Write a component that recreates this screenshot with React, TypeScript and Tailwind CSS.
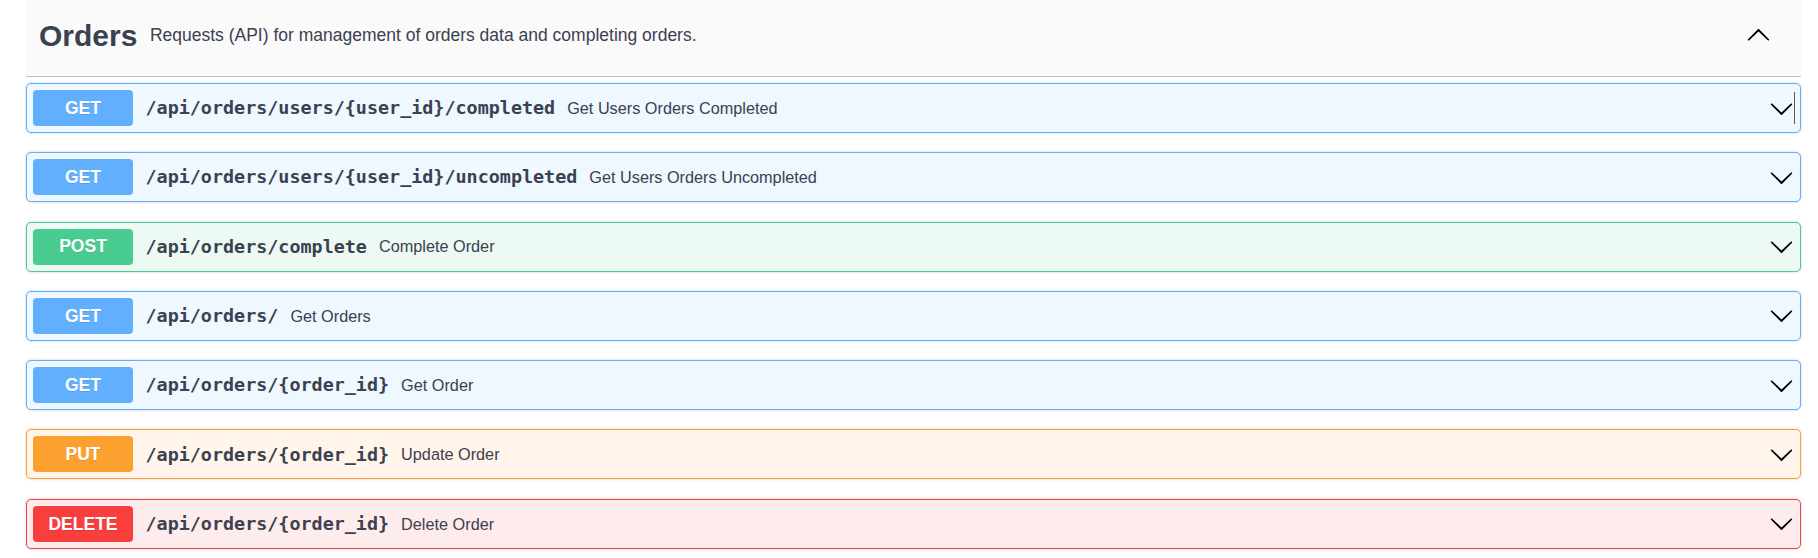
import React from 'react';

type Method = 'GET' | 'POST' | 'PUT' | 'DELETE';

const methodStyles: Record<Method, { row: string; btn: string }> = {
  GET: { row: 'border-[#61affe] bg-[#eff7ff]', btn: 'bg-[#61affe]' },
  POST: { row: 'border-[#49cc90] bg-[#edfaf4]', btn: 'bg-[#49cc90]' },
  PUT: { row: 'border-[#fca130] bg-[#fff5ea]', btn: 'bg-[#fca130]' },
  DELETE: { row: 'border-[#f93e3e] bg-[#feecec]', btn: 'bg-[#f93e3e]' },
};

const endpoints: { method: Method; path: string; summary: string }[] = [
  { method: 'GET', path: '/api/orders/users/{user_id}/completed', summary: 'Get Users Orders Completed' },
  { method: 'GET', path: '/api/orders/users/{user_id}/uncompleted', summary: 'Get Users Orders Uncompleted' },
  { method: 'POST', path: '/api/orders/complete', summary: 'Complete Order' },
  { method: 'GET', path: '/api/orders/', summary: 'Get Orders' },
  { method: 'GET', path: '/api/orders/{order_id}', summary: 'Get Order' },
  { method: 'PUT', path: '/api/orders/{order_id}', summary: 'Update Order' },
  { method: 'DELETE', path: '/api/orders/{order_id}', summary: 'Delete Order' },
];

// swagger style arrow
function Arrow({ up = false }: { up?: boolean }) {
  return (
    <svg
      width="25"
      height="25"
      viewBox="0 0 20 20"
      className={`shrink-0 ${up ? 'rotate-180' : ''}`}
      fill="#000"
    >
      <path d="M17.418 6.109c.272-.268.709-.268.979 0s.271.701 0 .969l-7.908 7.83c-.27.268-.707.268-.979 0l-7.908-7.83c-.27-.268-.27-.701 0-.969.271-.268.709-.268.979 0L10 13.25l7.418-7.141z" />
    </svg>
  );
}

function OperationRow({ method, path, summary, caret }: { method: Method; path: string; summary: string; caret?: boolean }) {
  const s = methodStyles[method];
  return (
    <div
      className={`relative flex items-center h-[50px] border rounded-[5px] px-[6px] shadow-[0_0_3px_rgba(0,0,0,0.19)] ${s.row}`}
    >
      <span
        className={`w-[100px] h-[36px] shrink-0 flex items-center justify-center rounded-[4px] text-white font-bold text-[17.5px] [text-shadow:0_1px_0_rgba(0,0,0,0.1)] ${s.btn}`}
      >
        {method}
      </span>
      <span className="pl-[12.5px] pr-[12px] font-['DejaVu_Sans_Mono',monospace] font-bold text-[18.4px] text-[#3b4151]">
        {path}
      </span>
      <span className="text-[16.25px] text-[#3b4151]">{summary}</span>
      <div className="ml-auto flex items-center">
        <Arrow />
      </div>
      {caret && <span className="absolute right-[5px] top-[8px] h-[32px] w-px bg-[#5a5a5a]" />}
    </div>
  );
}

export default function App() {
  return (
    <div className="min-h-screen bg-white pl-[26px] pr-[17px] font-['Liberation_Sans',Arial,sans-serif]">
      <div className="flex items-center h-[77px] pb-[5px] bg-[#fafafa] border-b border-[#3b4151]/30 pl-[13px] pr-[30px] text-[#3b4151]">
        <h3 className="text-[30px] font-bold">Orders</h3>
        <small className="pl-[12.5px] text-[17.5px]">
          Requests (API) for management of orders data and completing orders.
        </small>
        <div className="ml-auto flex items-center">
          <Arrow up />
        </div>
      </div>

      <div className="mt-[6px] flex flex-col gap-[19.3px]">
        {endpoints.map((e, i) => (
          <OperationRow key={i} method={e.method} path={e.path} summary={e.summary} caret={i === 0} />
        ))}
      </div>
    </div>
  );
}
